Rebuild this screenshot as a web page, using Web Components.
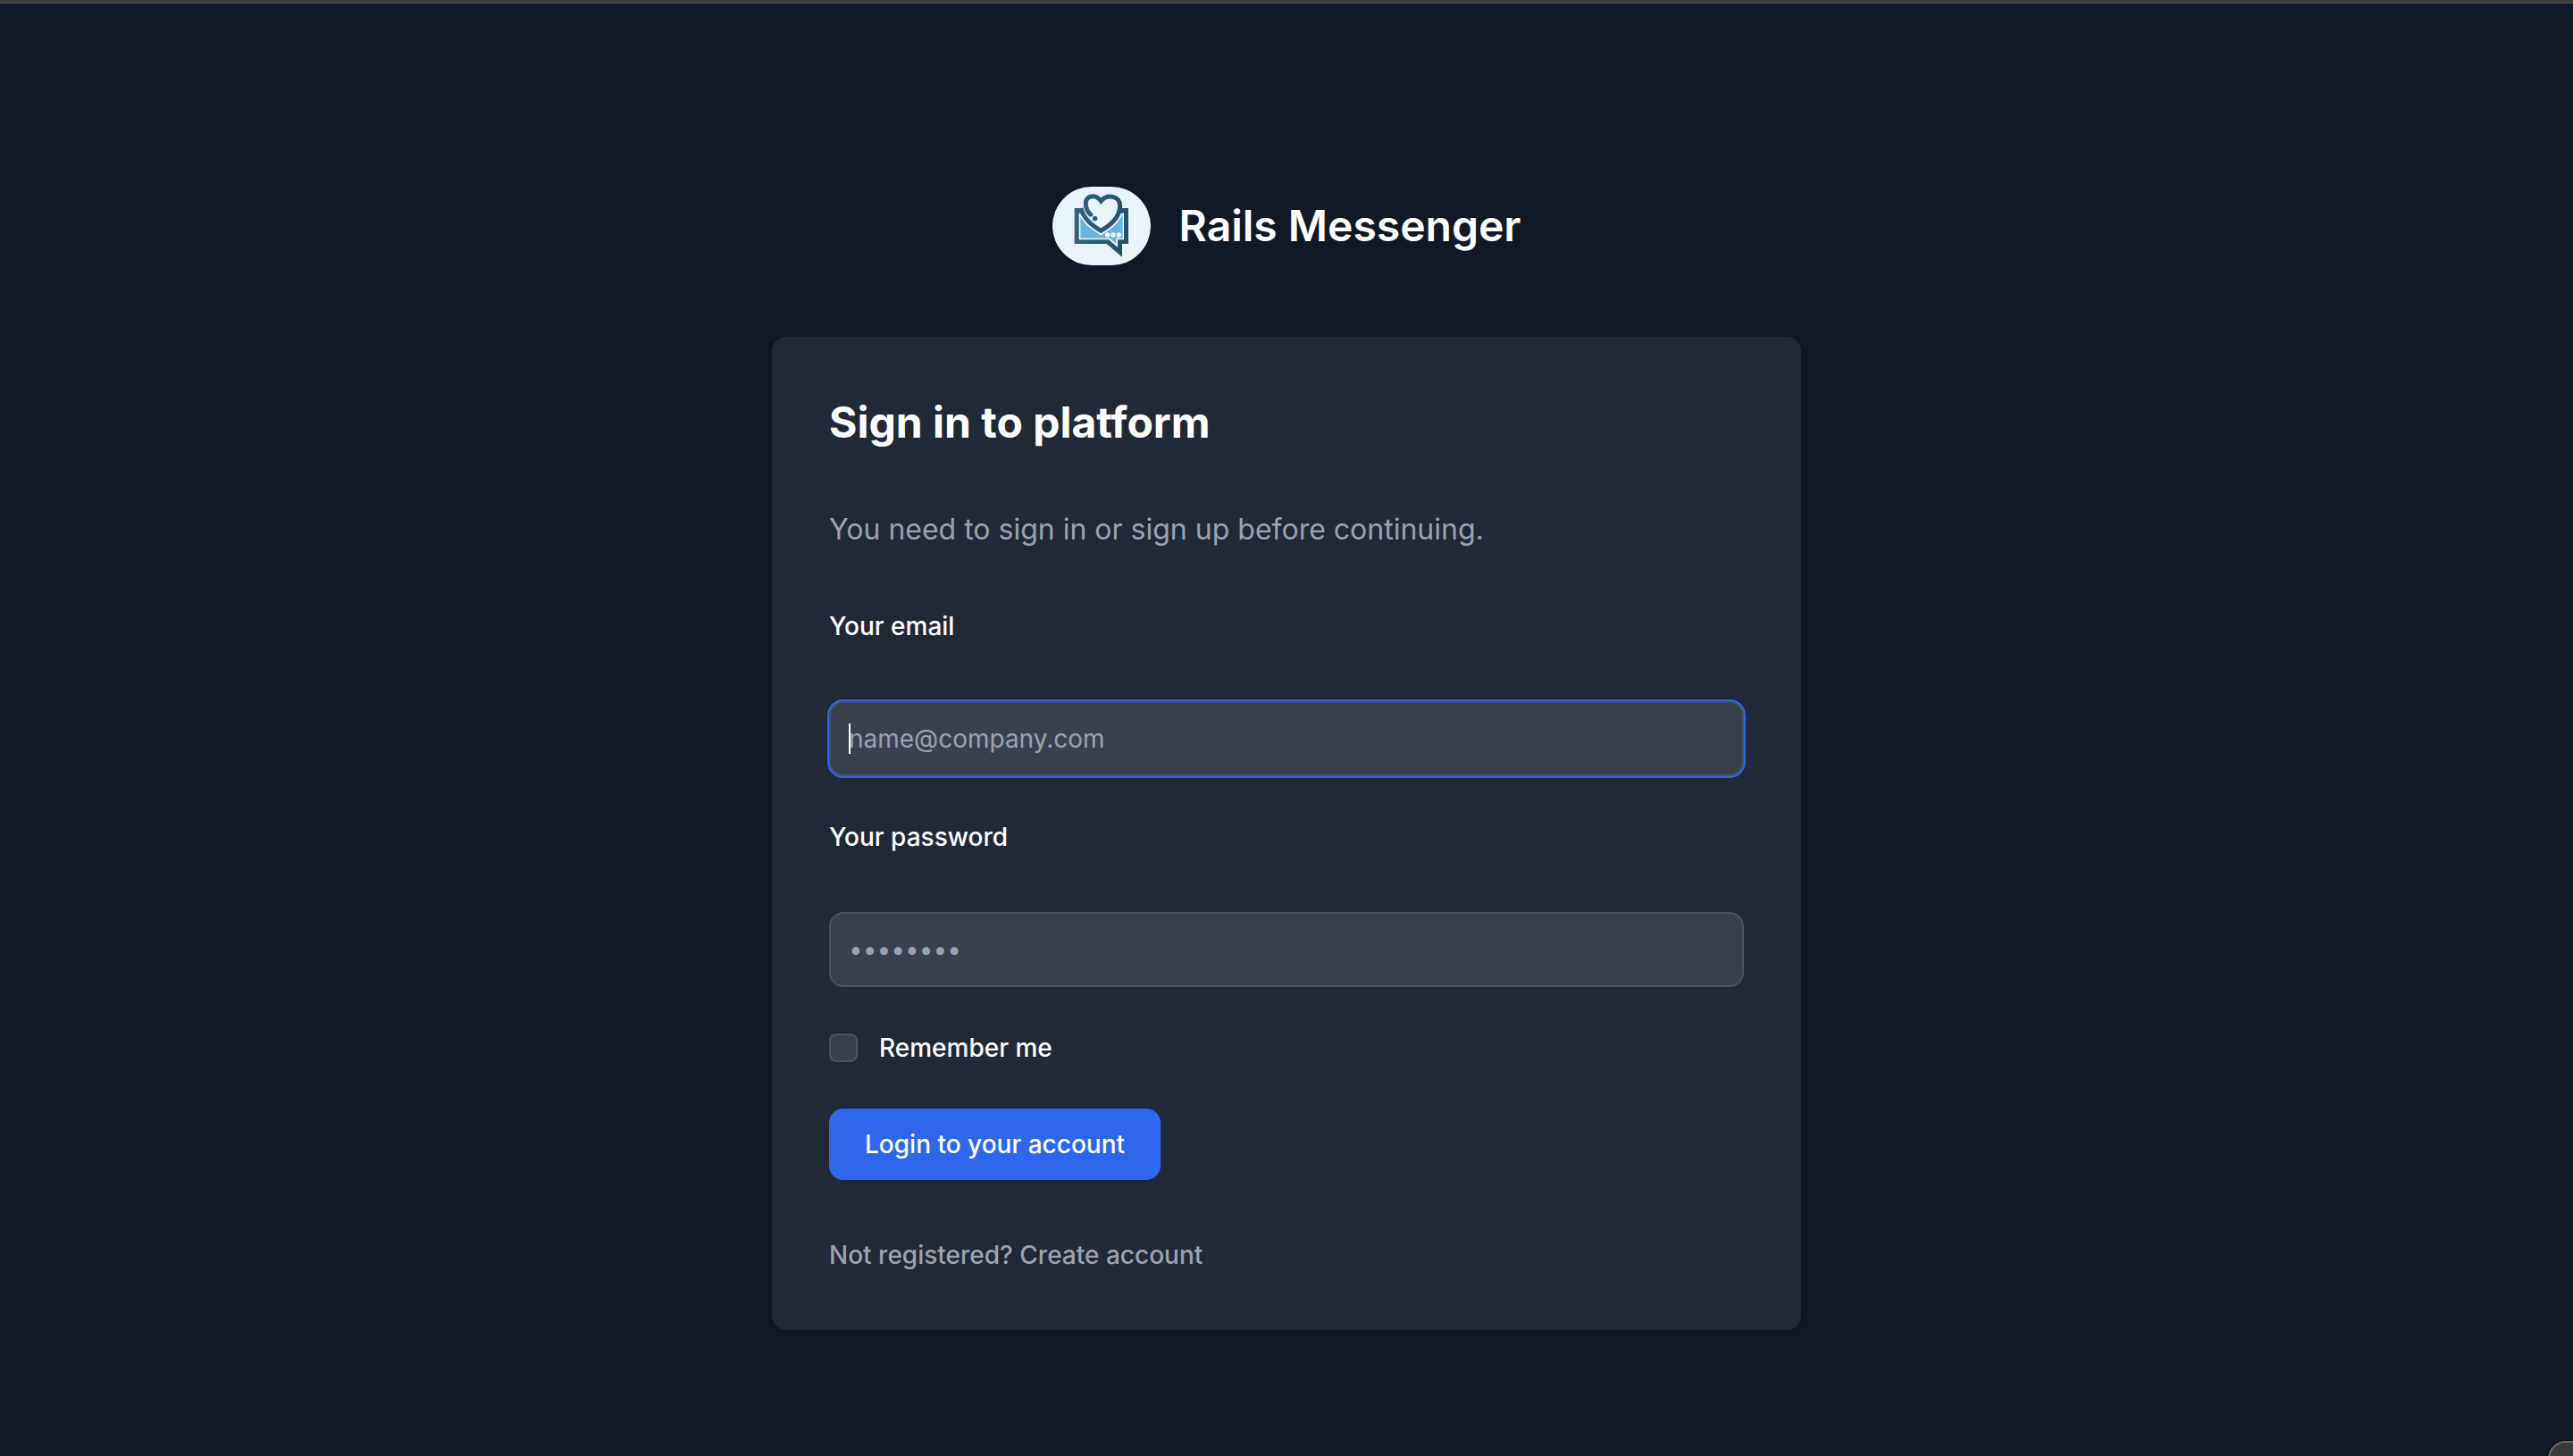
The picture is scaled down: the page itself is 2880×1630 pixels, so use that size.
<!DOCTYPE html>
<html lang="en">
<head>
<meta charset="utf-8">
<meta name="viewport" content="width=device-width, initial-scale=1">
<title>Rails Messenger</title>
<style>
  html, body { margin: 0; min-height: 100%; background: #111826; }
  body { font-family: Inter, "Liberation Sans", sans-serif; font-size: 28px; line-height: 40px; color: #fff; }
</style>
</head>
<body>
<rm-page>
  <rm-brand>Rails Messenger</rm-brand>
  <rm-card heading="Sign in to platform">
    <rm-login-form></rm-login-form>
  </rm-card>
</rm-page>

<script>
  class RmElement extends HTMLElement {
    connectedCallback() {
      if (this.shadowRoot) return;
      this.attachShadow({ mode: 'open' }).innerHTML = this.render();
    }
  }

  customElements.define('rm-page', class extends RmElement {
    render() {
      return `<style>
        :host { display: flex; flex-direction: column; box-sizing: border-box; min-height: 100vh; border-top: 2px solid #3c3c3c; }
        .line { height: 2px; background: #474747; }
        main { flex: 1; display: flex; flex-direction: column; align-items: center; justify-content: center; gap: 80px; padding-top: 64px; }
        .corner { position: fixed; right: -40px; bottom: -40px; width: 64px; height: 53px; border: 2px solid #6b6b6b; border-radius: 20px; background: #3a3a3a; box-shadow: 0 0 0 1px #000; }
      </style>
      <div class="line"></div>
      <main><slot></slot></main>
      <div class="corner"></div>`;
    }
  });

  customElements.define('rm-brand', class extends RmElement {
    render() {
      return `<style>
        :host { display: block; }
        a { display: flex; align-items: center; gap: 32px; color: #fff; text-decoration: none; font-size: 48px; line-height: 64px; font-weight: 600; }
        svg { width: 110px; height: 88px; border-radius: 44px; display: block; }
      </style>
      <a href="#">
        <svg viewBox="54 57 330 264" aria-hidden="true">
          <defs>
            <linearGradient id="ink" x1="128" y1="0" x2="309" y2="0" gradientUnits="userSpaceOnUse"><stop offset="0" stop-color="#2d6584"/><stop offset="1" stop-color="#264f66"/></linearGradient>
            <clipPath id="inside"><path d="M143 146H294V235H273V260L243 235H143Z"/></clipPath>
          </defs>
          <rect x="54" y="57" width="330" height="264" fill="#e8f3fa"/>
          <path d="M128 129H309V249H288V293L236 249H128Z" fill="url(#ink)"/>
          <path d="M143 146H294V235H273V260L243 235H143Z" fill="#f4fafd"/>
          <path d="M148 150H290V230H268V249L246 230H148Z" fill="#69b5df"/>
          <path d="M151 129C156 158 180 184 217 205C252 185 281 158 281 121" fill="none" stroke="#f4fafd" stroke-width="25" clip-path="url(#inside)"/>
          <path d="M156 126C160 158 182 182 217 204C252 184 281 158 281 121L270 85H165Z" fill="#e8f3fa"/>
          <path d="M150 129C156 158 180 184 217 205C252 185 281 158 281 121C281 88 239 80 217 105C197 80 166 88 166 112C166 130 174 144 183 152" fill="none" stroke="url(#ink)" stroke-width="15"/>
          <circle cx="183" cy="151" r="7" fill="#2a5d7a"/>
          <circle cx="197" cy="164" r="8" fill="#295b77"/>
          <g fill="#f4fafd"><circle cx="239" cy="219" r="8"/><circle cx="258" cy="219" r="8"/><circle cx="277" cy="219" r="8"/></g>
        </svg>
        <span><slot></slot></span>
      </a>`;
    }
  });

  customElements.define('rm-card', class extends RmElement {
    render() {
      return `<style>
        :host { display: flex; flex-direction: column; gap: 64px; box-sizing: border-box; width: 100%; max-width: 1152px; padding: 64px; border-radius: 16px; background: #222936; box-shadow: 0 2px 6px rgba(0, 0, 0, .1); }
        h2 { margin: 0; font-size: 48px; line-height: 64px; font-weight: 700; }
      </style>
      <h2>${this.getAttribute('heading')}</h2>
      <slot></slot>`;
    }
  });

  customElements.define('rm-field', class extends RmElement {
    render() {
      const a = n => this.getAttribute(n);
      return `<style>
        :host { display: flex; flex-direction: column; gap: 64px; }
        label { font-weight: 500; }
        .box { position: relative; display: flex; }
        input { flex: 1; min-width: 0; height: 84px; box-sizing: border-box; margin: 0; padding: 20px; border: 2px solid #4b5360; border-radius: 16px; background: #3b404f; color: #fff; font: inherit; outline: none; caret-color: transparent; }
        input::placeholder { color: #9ca2af; opacity: 1; }
        :host([active]) input { box-shadow: 0 0 0 2px #2e67eb; }
        .caret { display: none; position: absolute; left: 22px; top: 25px; width: 2px; height: 34px; background: #fff; }
        :host([active]) .caret { display: block; }
      </style>
      <label for="control">${a('label')}</label>
      <div class="box"><input id="control" type="${a('type')}" placeholder="${a('placeholder')}"><span class="caret"></span></div>`;
    }
  });

  customElements.define('rm-checkbox', class extends RmElement {
    render() {
      return `<style>
        :host { display: flex; align-items: center; gap: 24px; }
        input { appearance: none; box-sizing: border-box; width: 32px; height: 32px; margin: 0; border: 2px solid #4b5360; border-radius: 8px; background: #3b404f; }
        input:checked { background: #2e67eb; }
        label { font-weight: 500; }
      </style>
      <input type="checkbox" id="control"><label for="control"><slot></slot></label>`;
    }
  });

  customElements.define('rm-button', class extends RmElement {
    render() {
      return `<style>
        :host { display: flex; }
        button { margin: 0; padding: 20px 40px; border: 0; border-radius: 16px; background: #2e67eb; color: #fff; font: inherit; font-weight: 500; cursor: pointer; }
      </style>
      <button type="submit"><slot></slot></button>`;
    }
  });

  customElements.define('rm-login-form', class extends RmElement {
    render() {
      return `<style>
        :host { display: block; }
        form { display: flex; flex-direction: column; gap: 64px; margin: 0; }
        .fields { display: flex; flex-direction: column; gap: 48px; }
        p { margin: 0; color: #9ca2af; }
        .notice { font-size: 32px; line-height: 48px; }
        .signup { font-weight: 500; }
        a { color: inherit; text-decoration: none; }
      </style>
      <form>
        <p class="notice">You need to sign in or sign up before continuing.</p>
        <div class="fields">
          <rm-field active label="Your email" type="email" placeholder="name@company.com"></rm-field>
          <rm-field label="Your password" type="password" placeholder="••••••••"></rm-field>
          <rm-checkbox>Remember me</rm-checkbox>
          <rm-button>Login to your account</rm-button>
        </div>
        <p class="signup">Not registered? <a href="#">Create account</a></p>
      </form>`;
    }
  });
</script>
</body>
</html>
